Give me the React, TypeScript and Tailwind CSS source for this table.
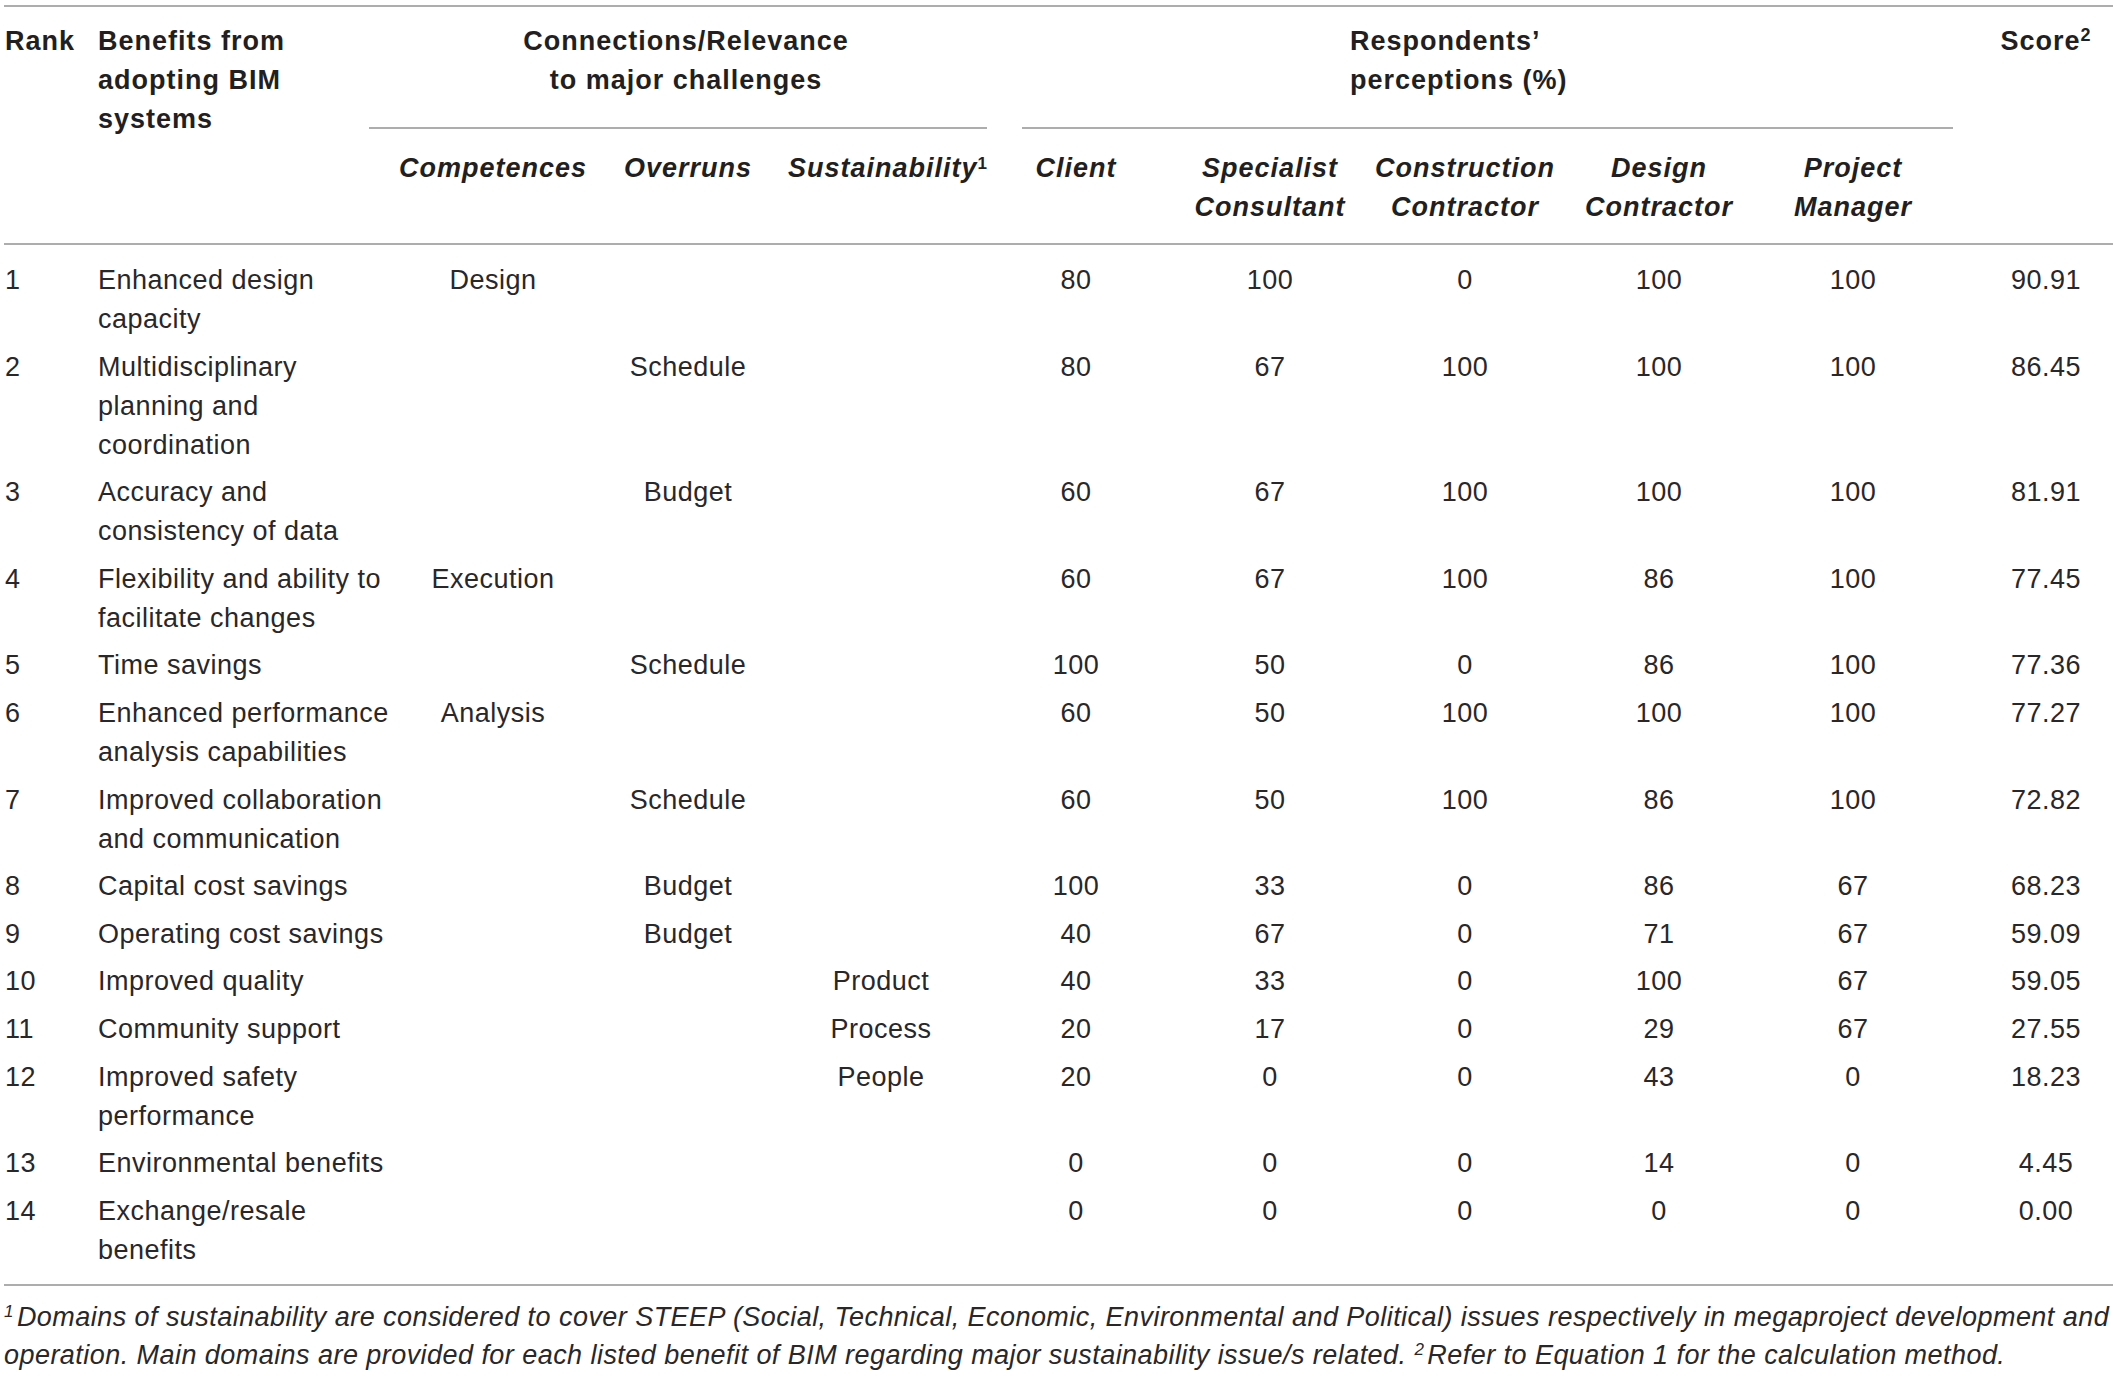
import React from "react";

interface BenefitRow {
    rank: number;
    benefit: string[];
    comp?: string;
    over?: string;
    sust?: string;
    vals: number[];
    score: string;
}

const rows: BenefitRow[] = [
    { rank: 1, benefit: ["Enhanced design", "capacity"], comp: "Design", vals: [80, 100, 0, 100, 100], score: "90.91" },
    { rank: 2, benefit: ["Multidisciplinary", "planning and", "coordination"], over: "Schedule", vals: [80, 67, 100, 100, 100], score: "86.45" },
    { rank: 3, benefit: ["Accuracy and", "consistency of data"], over: "Budget", vals: [60, 67, 100, 100, 100], score: "81.91" },
    { rank: 4, benefit: ["Flexibility and ability to", "facilitate changes"], comp: "Execution", vals: [60, 67, 100, 86, 100], score: "77.45" },
    { rank: 5, benefit: ["Time savings"], over: "Schedule", vals: [100, 50, 0, 86, 100], score: "77.36" },
    { rank: 6, benefit: ["Enhanced performance", "analysis capabilities"], comp: "Analysis", vals: [60, 50, 100, 100, 100], score: "77.27" },
    { rank: 7, benefit: ["Improved collaboration", "and communication"], over: "Schedule", vals: [60, 50, 100, 86, 100], score: "72.82" },
    { rank: 8, benefit: ["Capital cost savings"], over: "Budget", vals: [100, 33, 0, 86, 67], score: "68.23" },
    { rank: 9, benefit: ["Operating cost savings"], over: "Budget", vals: [40, 67, 0, 71, 67], score: "59.09" },
    { rank: 10, benefit: ["Improved quality"], sust: "Product", vals: [40, 33, 0, 100, 67], score: "59.05" },
    { rank: 11, benefit: ["Community support"], sust: "Process", vals: [20, 17, 0, 29, 67], score: "27.55" },
    { rank: 12, benefit: ["Improved safety", "performance"], sust: "People", vals: [20, 0, 0, 43, 0], score: "18.23" },
    { rank: 13, benefit: ["Environmental benefits"], vals: [0, 0, 0, 14, 0], score: "4.45" },
    { rank: 14, benefit: ["Exchange/resale", "benefits"], vals: [0, 0, 0, 0, 0], score: "0.00" },
];

// 줄바꿈 고정 텍스트
function Lines({ lines }: { lines: string[] }) {
    return (
        <>
            {lines.map((l, i) => (
                <div key={i} className="whitespace-nowrap">
                    {l}
                </div>
            ))}
        </>
    );
}

export default function App() {
    return (
        <div className="w-[2117px] min-h-screen bg-white px-[4px] pt-[5px] text-[27px] leading-[39px] tracking-[0.5px] text-[#2a2728] font-['Liberation_Sans',Arial,sans-serif]">
            <table className="w-full table-fixed border-collapse">
                <colgroup>
                    <col className="w-[91px]" />
                    <col className="w-[303px]" />
                    <col className="w-[190px]" />
                    <col className="w-[200px]" />
                    <col className="w-[186px]" />
                    <col className="w-[204px]" />
                    <col className="w-[184px]" />
                    <col className="w-[206px]" />
                    <col className="w-[182px]" />
                    <col className="w-[206px]" />
                    <col className="w-[157px]" />
                </colgroup>
                <thead className="text-[#231f20] tracking-[1px]">
                    <tr className="border-t-2 border-[#adadad]">
                        <th rowSpan={2} className="align-top text-left font-bold pl-[1px] pt-[15px]">
                            Rank
                        </th>
                        <th rowSpan={2} className="align-top text-left font-bold pl-[3px] pt-[15px]">
                            <Lines lines={["Benefits from", "adopting BIM", "systems"]} />
                        </th>
                        <th colSpan={3} className="align-top text-center font-bold pt-[15px]">
                            <Lines lines={["Connections/Relevance", "to major challenges"]} />
                            <div className="mt-[27px] ml-[-29px] mr-[-13px] h-[2px] bg-[#adadad]" />
                        </th>
                        <th colSpan={5} className="align-top text-left font-bold pt-[15px]">
                            <div className="pl-[376px]">
                                <Lines lines={["Respondents’", "perceptions (%)"]} />
                            </div>
                            <div className="mt-[27px] ml-[48px] mr-[3px] h-[2px] bg-[#adadad]" />
                        </th>
                        <th rowSpan={2} className="align-top text-center font-bold pl-[23px] pt-[15px]">
                            Score<sup className="text-[18px]">2</sup>
                        </th>
                    </tr>
                    <tr className="border-b-2 border-[#adadad]">
                        {[
                            ["Competences"],
                            ["Overruns"],
                            null,
                            ["Client"],
                            ["Specialist", "Consultant"],
                            ["Construction", "Contractor"],
                            ["Design", "Contractor"],
                            ["Project", "Manager"],
                        ].map((h, i) => (
                            <th key={i} className="align-top text-center font-bold italic pt-[20px] pb-[16px]">
                                {h ? (
                                    <Lines lines={h} />
                                ) : (
                                    <span className="whitespace-nowrap">
                                        Sustainability<sup className="text-[17px] not-italic">1</sup>
                                    </span>
                                )}
                            </th>
                        ))}
                    </tr>
                </thead>
                <tbody className="border-b-2 border-[#adadad]">
                    {rows.map((r, idx) => {
                        const first = idx === 0;
                        const last = idx === rows.length - 1;
                        const cell = first
                            ? "align-top pt-[16px]"
                            : last
                              ? "align-top pt-[8.6px] pb-[14px]"
                              : "align-top pt-[8.6px]";
                        return (
                            <tr key={r.rank}>
                                <td className={`${cell} text-left pl-[1px]`}>{r.rank}</td>
                                <td className={`${cell} text-left pl-[3px]`}>
                                    <Lines lines={r.benefit} />
                                </td>
                                <td className={`${cell} text-center`}>{r.comp}</td>
                                <td className={`${cell} text-center`}>{r.over}</td>
                                <td className={`${cell} text-center`}>{r.sust}</td>
                                {r.vals.map((v, i) => (
                                    <td key={i} className={`${cell} text-center`}>
                                        {v}
                                    </td>
                                ))}
                                <td className={`${cell} text-center pl-[23px]`}>{r.score}</td>
                            </tr>
                        );
                    })}
                </tbody>
            </table>

            {/* 각주 */}
            <div className="pt-[12px] leading-[38px] italic tracking-[0.45px]">
                <div className="whitespace-nowrap">
                    <sup className="text-[17px] mr-[3px]">1</sup>Domains of sustainability are considered to cover STEEP (Social,
                    Technical, Economic, Environmental and Political) issues respectively in megaproject development and
                </div>
                <div className="whitespace-nowrap">
                    operation. Main domains are provided for each listed benefit of BIM regarding major sustainability issue/s
                    related. <sup className="text-[17px] mr-[3px]">2</sup>Refer to Equation 1 for the calculation method.
                </div>
            </div>
        </div>
    );
}
